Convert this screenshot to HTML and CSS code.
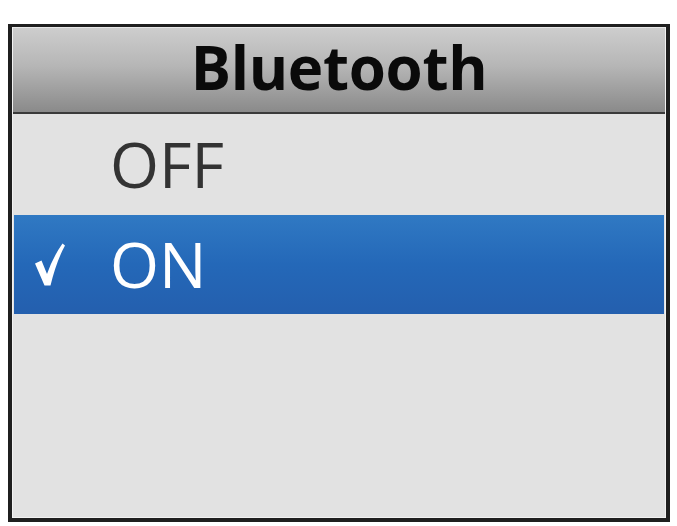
FILE: index.html
```html
<!DOCTYPE html>
<html>
<head>
<meta charset="utf-8">
<link rel="stylesheet" href="styles.css">
</head>
<body>
<div class="frame">
  <div class="inner">
    <div class="header">Bluetooth</div>
    <div class="list">
      <div class="row"><span class="mark"></span><span class="label">OFF</span></div>
      <div class="row selected">
        <span class="mark">
          <svg width="30" height="44" viewBox="0 0 30 44">
            <path d="M0 20.5 L6.5 17.5 L12 31 Q18 14 27.5 0.5 L30 2.5 Q21.5 18 15.5 42.5 L9.5 42.5 Z" fill="#ffffff"/>
          </svg>
        </span>
        <span class="label">ON</span>
      </div>
    </div>
  </div>
</div>
</body>
</html>
```
FILE: styles.css
```css
html, body {
  margin: 0;
  padding: 0;
  background: #ffffff;
}
body {
  font-family: "Open Sans", "Noto Sans", sans-serif;
}
.frame {
  margin: 24px 0 0 8px;
  width: 662px;
  height: 498px;
  box-sizing: border-box;
  border: 4px solid #1f1f1f;
  border-top-width: 3px;
  background: #e2e2e2;
}
.inner {
  height: 100%;
  box-sizing: border-box;
  border: 1px solid #f2f2f2;
  border-top-color: #e8e8e8;
  display: flex;
  flex-direction: column;
}
.header {
  height: 86px;
  box-sizing: border-box;
  border-bottom: 2px solid #3a3a3a;
  background: linear-gradient(to bottom, #cdcdcd 0%, #b6b6b6 45%, #8a8a8a 100%);
  display: flex;
  align-items: center;
  justify-content: center;
  font-weight: 700;
  font-size: 60px;
  color: #0a0a0a;
  letter-spacing: -0.3px;
  padding-bottom: 6px;
  flex: none;
}
.list {
  padding: 0 1px;
  display: flex;
  flex-direction: column;
}
.row {
  height: 101px;
  display: flex;
  align-items: center;
  font-size: 63px;
  color: #333333;
}
.row.selected {
  height: 99px;
  background: linear-gradient(to bottom, #3079c3 0%, #2468b8 50%, #245fae 100%);
  color: #ffffff;
}
.mark {
  width: 96px;
  display: flex;
  justify-content: flex-start;
  padding-left: 21px;
  box-sizing: border-box;
}
.label {
  line-height: 1;
  padding-bottom: 2px;
}
```
